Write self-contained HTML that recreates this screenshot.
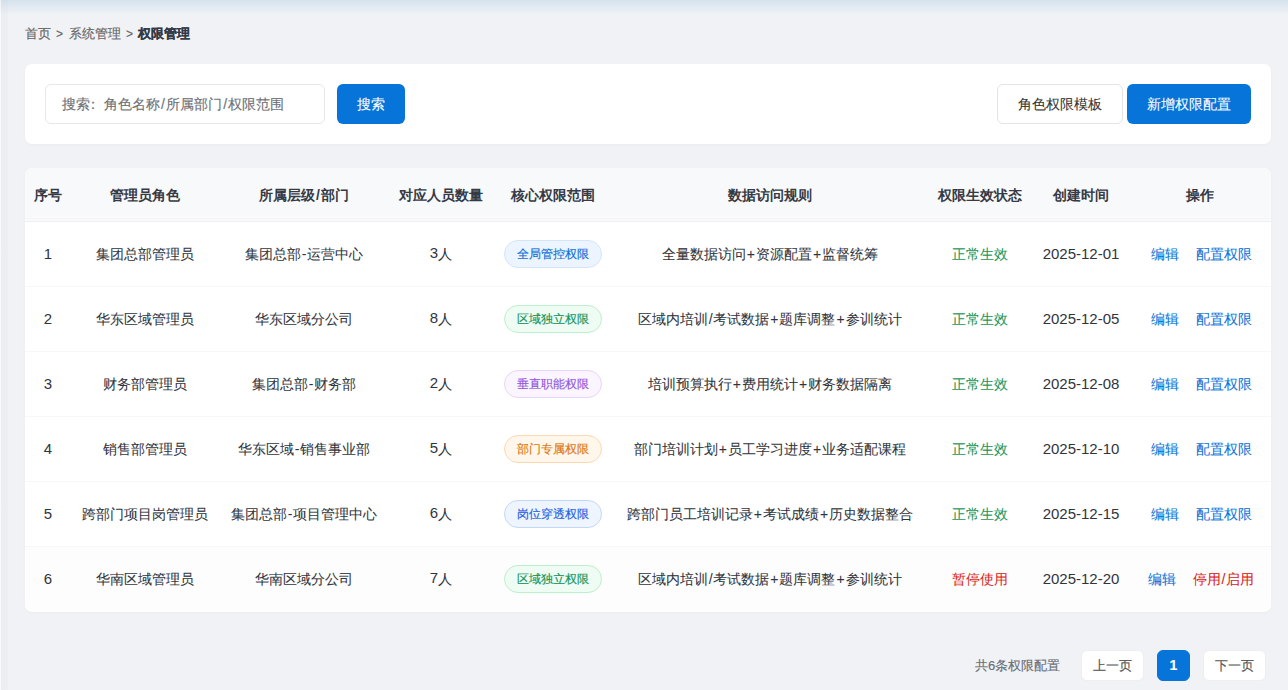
<!DOCTYPE html>
<html><head><meta charset="utf-8">
<style>
*{box-sizing:border-box;margin:0;padding:0}
html,body{width:1288px;height:690px;overflow:hidden}
body{font-family:"Liberation Sans",sans-serif;background:#f0f2f5;position:relative;color:#333}
.topbar{position:absolute;left:0;top:0;width:1288px;height:15px;background:linear-gradient(#d5e3ee 0px,#e3eaf2 7px,#f0f2f5 15px)}
.leftbar{position:absolute;left:0;top:0;width:8px;height:690px;background:linear-gradient(90deg,rgba(255,255,255,.6) 0,rgba(255,255,255,.6) 1px,rgba(60,70,90,.025) 1px,rgba(60,70,90,.02) 8px)}
.crumb{-webkit-text-stroke:0.15px currentColor;position:absolute;left:25px;top:25px;font-size:13px;color:#666;line-height:18px;white-space:nowrap}
.crumb span,.crumb b{position:absolute;top:0}
.crumb b{color:#333945;font-weight:bold}
.gt{font-size:12px}
.card{position:absolute;background:#fff;border-radius:7px;box-shadow:0 1px 3px rgba(0,0,0,0.03)}
.search{left:25px;top:64px;width:1246px;height:80px}
.inp{-webkit-text-stroke:0.15px currentColor;position:absolute;left:20px;top:20px;width:280px;height:40px;border:1px solid #e6e7ea;border-radius:6px;font-size:14px;color:#6f7277;line-height:38px;padding-left:16px;white-space:nowrap}
.btn{-webkit-text-stroke:0.08px currentColor;position:absolute;height:40px;border-radius:6px;font-size:14px;line-height:40px;text-align:center;white-space:nowrap}
.blue{background:#0674d8;color:#fff}
.white{background:#fff;border:1px solid #e2e4e8;color:#333;line-height:38px}
.tbl{left:25px;top:168px;width:1246px;height:444px;overflow:hidden}
table{border-collapse:collapse;width:1246px;table-layout:fixed}
th{height:53px;padding-top:4px !important;background:linear-gradient(#f8f9fb 0,#f8f9fb 49px,#fcfcfd 49px,#fcfcfd 50px,#f2f3f5 50px,#f2f3f5 51px,#f9fafc 51px);font-size:14px;font-weight:bold;color:#353a45;border-bottom:1px solid #eeeff2;text-align:center;white-space:nowrap;padding:0}
td{-webkit-text-stroke:0.06px currentColor;height:65px;padding-top:2px !important;font-size:14px;color:#30343c;text-align:center;white-space:nowrap;border-bottom:1px solid #f6f7f8;padding:0}
tr:last-child td{border-bottom:none;background:#fdfdfd}
.badge{position:relative;top:-1px;-webkit-text-stroke:0.15px currentColor;display:inline-block;height:28px;line-height:26px;padding:0 12px;border-radius:14px;font-size:12px;border:1px solid}
.b1{background:#ebf4ff;border-color:#d3e5fb;color:#0f6fd8}
.b2{background:#effcf3;border-color:#bdefcc;color:#14945a}
.b3{background:#faf5ff;border-color:#e6d6fb;color:#9457dd}
.b4{background:#fff7ec;border-color:#fbd9b0;color:#e07812}
.b5{background:#eff5ff;border-color:#c3d8f6;color:#2560e0}
i{font-style:normal}
.pl{margin:0 1px}
.sl{margin:0 0.5px}
.hy{margin:0 0.6px}
.dg{font-size:15px;-webkit-text-stroke:0;position:relative;top:-1px}
td.date{font-size:15px;-webkit-text-stroke:0;padding-top:0 !important}
.gap{display:inline-block;width:17px}
td:last-child{padding-left:2px !important}
.ok{color:#16965a}
.stop{color:#dc1f1f}
.lnk{color:#0674d8}
.red{color:#d92020}
.pg{-webkit-text-stroke:0.15px currentColor;position:absolute;font-size:13px;white-space:nowrap}
.pbtn{-webkit-text-stroke:0.15px currentColor;position:absolute;top:650px;height:31px;background:#fff;border:1px solid #eceef2;border-radius:6px;font-size:13px;color:#555;line-height:29px;text-align:center}
</style></head><body>
<div class="topbar"></div>
<div class="leftbar"></div>
<div class="crumb"><span style="left:0">首页</span><span style="left:31px" class="gt">&gt;</span><span style="left:44px">系统管理</span><span style="left:101px" class="gt">&gt;</span><b style="left:113px">权限管理</b></div>
<div class="card search">
  <div class="inp">搜索<i style="margin-left:-4px;margin-right:4px">：</i>角色名称<i style="margin:0 1.1px">/</i>所属部门<i style="margin:0 1.1px">/</i>权限范围</div>
  <div class="btn blue" style="left:312px;top:20px;width:68px">搜索</div>
  <div class="btn white" style="left:972px;top:20px;width:126px">角色权限模板</div>
  <div class="btn blue" style="left:1102px;top:20px;width:124px">新增权限配置</div>
</div>
<div class="card tbl">
<table>
<colgroup><col style="width:46px"><col style="width:148px"><col style="width:170px"><col style="width:104px"><col style="width:120px"><col style="width:314px"><col style="width:106px"><col style="width:96px"><col style="width:142px"></colgroup>
<tr><th>序号</th><th>管理员角色</th><th>所属层级<i style="margin:0 1.5px">/</i>部门</th><th>对应人员数量</th><th>核心权限范围</th><th>数据访问规则</th><th>权限生效状态</th><th>创建时间</th><th>操作</th></tr>
<tr><td><i class="dg">1</i></td><td>集团总部管理员</td><td>集团总部<i class="hy">-</i>运营中心</td><td><i class="dg">3</i>人</td><td><span class="badge b1">全局管控权限</span></td><td>全量数据访问<i class="pl">+</i>资源配置<i class="pl">+</i>监督统筹</td><td class="ok">正常生效</td><td class="date">2025-12-01</td><td><span class="lnk">编辑</span><span class="gap"></span><span class="lnk">配置权限</span></td></tr>
<tr><td><i class="dg">2</i></td><td>华东区域管理员</td><td>华东区域分公司</td><td><i class="dg">8</i>人</td><td><span class="badge b2">区域独立权限</span></td><td>区域内培训<i class="sl">/</i>考试数据<i class="pl">+</i>题库调整<i class="pl">+</i>参训统计</td><td class="ok">正常生效</td><td class="date">2025-12-05</td><td><span class="lnk">编辑</span><span class="gap"></span><span class="lnk">配置权限</span></td></tr>
<tr><td><i class="dg">3</i></td><td>财务部管理员</td><td>集团总部<i class="hy">-</i>财务部</td><td><i class="dg">2</i>人</td><td><span class="badge b3">垂直职能权限</span></td><td>培训预算执行<i class="pl">+</i>费用统计<i class="pl">+</i>财务数据隔离</td><td class="ok">正常生效</td><td class="date">2025-12-08</td><td><span class="lnk">编辑</span><span class="gap"></span><span class="lnk">配置权限</span></td></tr>
<tr><td><i class="dg">4</i></td><td>销售部管理员</td><td>华东区域<i class="hy">-</i>销售事业部</td><td><i class="dg">5</i>人</td><td><span class="badge b4">部门专属权限</span></td><td>部门培训计划<i class="pl">+</i>员工学习进度<i class="pl">+</i>业务适配课程</td><td class="ok">正常生效</td><td class="date">2025-12-10</td><td><span class="lnk">编辑</span><span class="gap"></span><span class="lnk">配置权限</span></td></tr>
<tr><td><i class="dg">5</i></td><td>跨部门项目岗管理员</td><td>集团总部<i class="hy">-</i>项目管理中心</td><td><i class="dg">6</i>人</td><td><span class="badge b5">岗位穿透权限</span></td><td>跨部门员工培训记录<i class="pl">+</i>考试成绩<i class="pl">+</i>历史数据整合</td><td class="ok">正常生效</td><td class="date">2025-12-15</td><td><span class="lnk">编辑</span><span class="gap"></span><span class="lnk">配置权限</span></td></tr>
<tr><td><i class="dg">6</i></td><td>华南区域管理员</td><td>华南区域分公司</td><td><i class="dg">7</i>人</td><td><span class="badge b2">区域独立权限</span></td><td>区域内培训<i class="sl">/</i>考试数据<i class="pl">+</i>题库调整<i class="pl">+</i>参训统计</td><td class="stop">暂停使用</td><td class="date">2025-12-20</td><td><span class="lnk">编辑</span><span class="gap"></span><span class="red">停用<i class="sl">/</i>启用</span></td></tr>
</table>
</div>
<div class="pg" style="left:975px;top:657px;color:#6a6e76">共6条权限配置</div>
<div class="pbtn" style="left:1081px;width:63px">上一页</div>
<div class="pbtn" style="left:1157px;width:33px;background:#0674d8;border-color:#0674d8;color:#fff;font-size:14px;font-weight:bold">1</div>
<div class="pbtn" style="left:1203px;width:63px">下一页</div>
</body></html>
